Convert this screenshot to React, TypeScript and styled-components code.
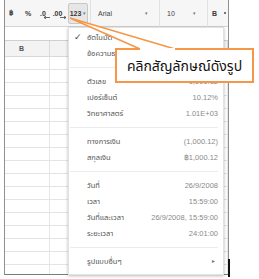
import React from "react";
import styled, { createGlobalStyle } from "styled-components";

const GlobalStyle = createGlobalStyle`
  body {
    margin: 0;
    background: #ffffff;
  }
`;

interface FormatItem {
  label: string;
  value?: string;
  checked?: boolean;
  arrow?: boolean;
}

// groups are split by separators in the menu
const groups: FormatItem[][] = [
  [{ label: "อัตโนมัติ", checked: true }, { label: "ข้อความธรรมดา" }],
  [
    { label: "ตัวเลข", value: "1,000.12" },
    { label: "เปอร์เซ็นต์", value: "10.12%" },
    { label: "วิทยาศาสตร์", value: "1.01E+03" },
  ],
  [
    { label: "ทางการเงิน", value: "(1,000.12)" },
    { label: "สกุลเงิน", value: "฿1,000.12" },
  ],
  [
    { label: "วันที่", value: "26/9/2008" },
    { label: "เวลา", value: "15:59:00" },
    { label: "วันที่และเวลา", value: "26/9/2008, 15:59:00" },
    { label: "ระยะเวลา", value: "24:01:00" },
  ],
  [{ label: "รูปแบบอื่นๆ", arrow: true }],
];

const ROW_COUNT = 17;

export default function App() {
  return (
    <>
      <GlobalStyle />
      <Page>
        <Frame>
          <Toolbar>
            <ToolItem $w={12}>฿</ToolItem>
            <ToolItem $w={22}>%</ToolItem>
            <ToolItem $w={12}>
              <Decimal>
                .0
                <svg width="6" height="3" viewBox="0 0 6 3">
                  <path d="M0 1.5 L6 1.5 M0 1.5 L2 0 M0 1.5 L2 3" stroke="#444" strokeWidth="0.8" fill="none" />
                </svg>
              </Decimal>
            </ToolItem>
            <ToolItem $w={17}>
              <Decimal>
                .00
                <svg width="6" height="3" viewBox="0 0 6 3">
                  <path d="M0 1.5 L6 1.5 M6 1.5 L4 0 M6 1.5 L4 3" stroke="#444" strokeWidth="0.8" fill="none" />
                </svg>
              </Decimal>
            </ToolItem>
            <PressedButton>
              123<Caret>▾</Caret>
            </PressedButton>
            <Divider />
            <SelectBox $w={66}>
              Arial<Caret>▾</Caret>
            </SelectBox>
            <Divider />
            <SelectBox $w={45}>
              10<Caret>▾</Caret>
            </SelectBox>
            <Divider />
            <ToolItem $w={13}>B</ToolItem>
            <ToolItem $w={8}>
              <Dot />
            </ToolItem>
          </Toolbar>
          <FormulaStrip />
          <HeaderRow>
            <HeaderCell>B</HeaderCell>
            <HeaderCell />
          </HeaderRow>
          {Array.from({ length: ROW_COUNT }).map((_, i) => (
            <GridRow key={i}>
              <GridCell />
              <GridCell />
            </GridRow>
          ))}
        </Frame>

        <Menu>
          {groups.map((group, gi) => (
            <React.Fragment key={gi}>
              {gi > 0 && <Separator />}
              {group.map((item) => (
                <MenuRow key={item.label}>
                  <Check>{item.checked ? "✓" : ""}</Check>
                  <MenuLabel>{item.label}</MenuLabel>
                  {item.value && <MenuValue>{item.value}</MenuValue>}
                  {item.arrow && <SubArrow>►</SubArrow>}
                </MenuRow>
              ))}
            </React.Fragment>
          ))}
        </Menu>

        <Pointer width="259" height="60" viewBox="0 0 259 60">
          <polygon points="70,18 140,49 175,49" fill="#ffffff" />
          <polygon points="140,48.5 175,48.5 175,52 140,52" fill="#ffffff" />
          <polyline points="140,49 70,18 175,49" fill="none" stroke="#f79646" strokeWidth="1.6" strokeLinejoin="miter" />
        </Pointer>
        <Callout>คลิกสัญลักษณ์ดังรูป</Callout>
        <PointerCover />
        <Mark />
      </Page>
    </>
  );
}

const Page = styled.div`
  position: relative;
  width: 259px;
  height: 279px;
  overflow: hidden;
  font-family: "Liberation Sans", Arial, sans-serif;
`;

const Frame = styled.div`
  margin-left: 4px;
  width: 225px;
  height: 275px;
  box-sizing: border-box;
  border-left: 1px solid #8f8f8f;
  border-right: 1px solid #8f8f8f;
  border-bottom: 1px solid #7a7a7a;
  overflow: hidden;
  background: #ffffff;
`;

const Toolbar = styled.div`
  display: flex;
  align-items: center;
  height: 27px;
  box-sizing: border-box;
  background: #f6f6f6;
  border-bottom: 1px solid #d4d4d4;
  font-size: 7px;
  font-weight: bold;
  color: #3a3a3a;
`;

const ToolItem = styled.div<{ $w: number }>`
  width: ${(p) => p.$w}px;
  flex: none;
  display: flex;
  justify-content: center;
  align-items: center;
`;

const Decimal = styled.span`
  display: inline-flex;
  align-items: flex-end;
  line-height: 1;

  svg {
    margin-left: -2px;
    margin-bottom: -2px;
  }
`;

const PressedButton = styled.div`
  width: 20px;
  height: 21px;
  flex: none;
  box-sizing: border-box;
  display: flex;
  align-items: center;
  justify-content: center;
  background: #e6e6e6;
  border: 1px solid #c8c8c8;
  border-radius: 2px;
  font-size: 7px;
`;

const Caret = styled.span`
  font-size: 5px;
  color: #777;
  margin-left: 2px;
  font-weight: normal;
`;

const Divider = styled.div`
  width: 1px;
  height: 27px;
  flex: none;
  margin-left: 2px;
  background: #e2e2e2;
`;

const SelectBox = styled.div<{ $w: number }>`
  width: ${(p) => p.$w}px;
  flex: none;
  box-sizing: border-box;
  padding: 0 9px 0 7px;
  display: flex;
  justify-content: space-between;
  align-items: center;
  font-weight: normal;
  color: #444;
`;

const Dot = styled.div`
  width: 2px;
  height: 2px;
  background: #777;
`;

const FormulaStrip = styled.div`
  height: 13px;
  border-bottom: 1px solid #cfcfcf;
`;

const HeaderRow = styled.div`
  display: grid;
  grid-template-columns: 45px 1fr;
  height: 16px;
  box-sizing: border-box;
  background: #f3f3f3;
  border-bottom: 1px solid #d8d8d8;
`;

const HeaderCell = styled.div`
  border-right: 1px solid #dadada;
  display: flex;
  align-items: center;
  padding-left: 14px;
  font-size: 7px;
  font-weight: bold;
  color: #555;
`;

const GridRow = styled.div`
  display: grid;
  grid-template-columns: 45px 1fr;
  height: 13px;
  box-sizing: border-box;
  border-bottom: 1px solid #e4e4e4;
`;

const GridCell = styled.div`
  border-right: 1px solid #e6e6e6;
`;

const Menu = styled.div`
  position: absolute;
  left: 68px;
  top: 27px;
  width: 156px;
  box-sizing: border-box;
  padding: 1px 5px 5px 0;
  background: #ffffff;
  box-shadow: 0 1px 3px rgba(0, 0, 0, 0.28);
  border: 1px solid #e2e2e2;
  font-family: "Noto Sans Thai", "Liberation Sans", sans-serif;
`;

const MenuRow = styled.div`
  display: flex;
  align-items: center;
  height: 16px;
  font-size: 7.5px;
`;

const Check = styled.span`
  width: 18px;
  flex: none;
  text-align: center;
  font-size: 9px;
  color: #444;
`;

const MenuLabel = styled.span`
  flex: 1;
  color: #555;
  white-space: nowrap;
`;

const MenuValue = styled.span`
  color: #8a8a8a;
  font-family: "Liberation Sans", Arial, sans-serif;
  white-space: nowrap;
`;

const SubArrow = styled.span`
  color: #777;
  font-size: 5px;
  margin-right: 2px;
`;

const Separator = styled.div`
  height: 12px;
  display: flex;
  align-items: center;

  &::after {
    content: "";
    flex: 1;
    height: 1px;
    margin-left: 1px;
    background: #ebebeb;
  }
`;

const Pointer = styled.svg`
  position: absolute;
  left: 0;
  top: 0;
  z-index: 3;
`;

const Callout = styled.div`
  position: absolute;
  left: 115px;
  top: 48px;
  width: 139px;
  height: 35px;
  box-sizing: border-box;
  border: 2px solid #f79646;
  background: #ffffff;
  display: flex;
  align-items: center;
  justify-content: center;
  padding-top: 1px;
  font-family: "Noto Sans Thai", "Liberation Sans", sans-serif;
  font-size: 14px;
  color: #111;
  z-index: 2;
`;

const PointerCover = styled.div`
  position: absolute;
  left: 140px;
  top: 48px;
  width: 35px;
  height: 3px;
  background: #ffffff;
  z-index: 3;
`;

const Mark = styled.div`
  position: absolute;
  left: 228px;
  top: 259px;
  width: 2px;
  height: 18px;
  background: #111;
`;
